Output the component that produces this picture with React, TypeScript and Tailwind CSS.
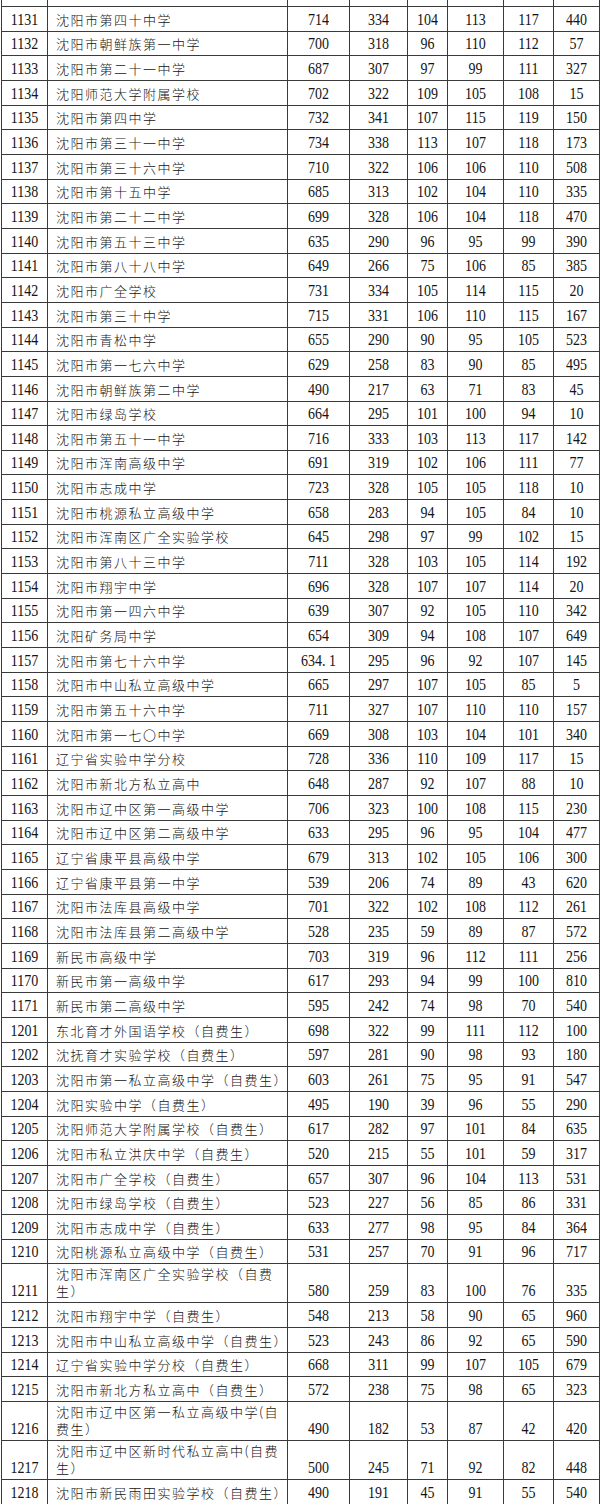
import React from "react";

type Row = [string, string[], string, string, string, string, string, string];

const rows: Row[] = [
  ["1131", ["沈阳市第四十中学"], "714", "334", "104", "113", "117", "440"],
  ["1132", ["沈阳市朝鲜族第一中学"], "700", "318", "96", "110", "112", "57"],
  ["1133", ["沈阳市第二十一中学"], "687", "307", "97", "99", "111", "327"],
  ["1134", ["沈阳师范大学附属学校"], "702", "322", "109", "105", "108", "15"],
  ["1135", ["沈阳市第四中学"], "732", "341", "107", "115", "119", "150"],
  ["1136", ["沈阳市第三十一中学"], "734", "338", "113", "107", "118", "173"],
  ["1137", ["沈阳市第三十六中学"], "710", "322", "106", "106", "110", "508"],
  ["1138", ["沈阳市第十五中学"], "685", "313", "102", "104", "110", "335"],
  ["1139", ["沈阳市第二十二中学"], "699", "328", "106", "104", "118", "470"],
  ["1140", ["沈阳市第五十三中学"], "635", "290", "96", "95", "99", "390"],
  ["1141", ["沈阳市第八十八中学"], "649", "266", "75", "106", "85", "385"],
  ["1142", ["沈阳市广全学校"], "731", "334", "105", "114", "115", "20"],
  ["1143", ["沈阳市第三十中学"], "715", "331", "106", "110", "115", "167"],
  ["1144", ["沈阳市青松中学"], "655", "290", "90", "95", "105", "523"],
  ["1145", ["沈阳市第一七六中学"], "629", "258", "83", "90", "85", "495"],
  ["1146", ["沈阳市朝鲜族第二中学"], "490", "217", "63", "71", "83", "45"],
  ["1147", ["沈阳市绿岛学校"], "664", "295", "101", "100", "94", "10"],
  ["1148", ["沈阳市第五十一中学"], "716", "333", "103", "113", "117", "142"],
  ["1149", ["沈阳市浑南高级中学"], "691", "319", "102", "106", "111", "77"],
  ["1150", ["沈阳市志成中学"], "723", "328", "105", "105", "118", "10"],
  ["1151", ["沈阳市桃源私立高级中学"], "658", "283", "94", "105", "84", "10"],
  ["1152", ["沈阳市浑南区广全实验学校"], "645", "298", "97", "99", "102", "15"],
  ["1153", ["沈阳市第八十三中学"], "711", "328", "103", "105", "114", "192"],
  ["1154", ["沈阳市翔宇中学"], "696", "328", "107", "107", "114", "20"],
  ["1155", ["沈阳市第一四六中学"], "639", "307", "92", "105", "110", "342"],
  ["1156", ["沈阳矿务局中学"], "654", "309", "94", "108", "107", "649"],
  ["1157", ["沈阳市第七十六中学"], "634. 1", "295", "96", "92", "107", "145"],
  ["1158", ["沈阳市中山私立高级中学"], "665", "297", "107", "105", "85", "5"],
  ["1159", ["沈阳市第五十六中学"], "711", "327", "107", "110", "110", "157"],
  ["1160", ["沈阳市第一七〇中学"], "669", "308", "103", "104", "101", "340"],
  ["1161", ["辽宁省实验中学分校"], "728", "336", "110", "109", "117", "15"],
  ["1162", ["沈阳市新北方私立高中"], "648", "287", "92", "107", "88", "10"],
  ["1163", ["沈阳市辽中区第一高级中学"], "706", "323", "100", "108", "115", "230"],
  ["1164", ["沈阳市辽中区第二高级中学"], "633", "295", "96", "95", "104", "477"],
  ["1165", ["辽宁省康平县高级中学"], "679", "313", "102", "105", "106", "300"],
  ["1166", ["辽宁省康平县第一中学"], "539", "206", "74", "89", "43", "620"],
  ["1167", ["沈阳市法库县高级中学"], "701", "322", "102", "108", "112", "261"],
  ["1168", ["沈阳市法库县第二高级中学"], "528", "235", "59", "89", "87", "572"],
  ["1169", ["新民市高级中学"], "703", "319", "96", "112", "111", "256"],
  ["1170", ["新民市第一高级中学"], "617", "293", "94", "99", "100", "810"],
  ["1171", ["新民市第二高级中学"], "595", "242", "74", "98", "70", "540"],
  ["1201", ["东北育才外国语学校（自费生）"], "698", "322", "99", "111", "112", "100"],
  ["1202", ["沈抚育才实验学校（自费生）"], "597", "281", "90", "98", "93", "180"],
  ["1203", ["沈阳市第一私立高级中学（自费生）"], "603", "261", "75", "95", "91", "547"],
  ["1204", ["沈阳实验中学（自费生）"], "495", "190", "39", "96", "55", "290"],
  ["1205", ["沈阳师范大学附属学校（自费生）"], "617", "282", "97", "101", "84", "635"],
  ["1206", ["沈阳市私立洪庆中学（自费生）"], "520", "215", "55", "101", "59", "317"],
  ["1207", ["沈阳市广全学校（自费生）"], "657", "307", "96", "104", "113", "531"],
  ["1208", ["沈阳市绿岛学校（自费生）"], "523", "227", "56", "85", "86", "331"],
  ["1209", ["沈阳市志成中学（自费生）"], "633", "277", "98", "95", "84", "364"],
  ["1210", ["沈阳桃源私立高级中学（自费生）"], "531", "257", "70", "91", "96", "717"],
  ["1211", ["沈阳市浑南区广全实验学校（自费", "生）"], "580", "259", "83", "100", "76", "335"],
  ["1212", ["沈阳市翔宇中学（自费生）"], "548", "213", "58", "90", "65", "960"],
  ["1213", ["沈阳市中山私立高级中学（自费生）"], "523", "243", "86", "92", "65", "590"],
  ["1214", ["辽宁省实验中学分校（自费生）"], "668", "311", "99", "107", "105", "679"],
  ["1215", ["沈阳市新北方私立高中（自费生）"], "572", "238", "75", "98", "65", "323"],
  ["1216", ["沈阳市辽中区第一私立高级中学(自", "费生）"], "490", "182", "53", "87", "42", "420"],
  ["1217", ["沈阳市辽中区新时代私立高中(自费", "生）"], "500", "245", "71", "92", "82", "448"],
  ["1218", ["沈阳市新民雨田实验学校（自费生）"], "490", "191", "45", "91", "55", "540"],
];

const numCols = ["w-[62px]", "w-[58px]", "w-[40px]", "w-[56px]", "w-[50px]", "w-[46px]"];

function NumCell({ value, width }: { value: string; width: string }) {
  return (
    <div
      className={`${width} shrink-0 border-r border-[#3a3a3a] flex items-end justify-center pb-[3px] font-['Liberation_Serif',serif] text-[14px] leading-[17px] whitespace-pre`}
    >
      <span className="inline-block scale-y-[1.2]">{value}</span>
    </div>
  );
}

function TableRow({ row }: { row: Row }) {
  const [id, name, ...nums] = row;
  const tall = name.length > 1;
  return (
    <div className={`flex border-b border-[#3a3a3a] ${tall ? "h-[39px]" : "h-[24.66px]"}`}>
      <NumCell value={id} width="w-[46px]" />
      <div className="w-[240px] shrink-0 border-r border-[#3a3a3a] flex flex-col justify-end pl-[8px] pb-[3px] font-['Noto_Sans_CJK_SC',sans-serif] font-light text-[13px] leading-[17px] tracking-[1.5px] whitespace-nowrap">
        {name.map((line) => (
          <span key={line}>{line}</span>
        ))}
      </div>
      {nums.map((n, i) => (
        <NumCell key={i} value={n} width={numCols[i]} />
      ))}
    </div>
  );
}

export default function App() {
  return (
    <div className="w-[600px] h-[1504px] overflow-hidden bg-white text-[#141414]">
      <div className="ml-[1px] border-l border-[#3a3a3a]">
        <div className="flex h-[7px] border-b border-[#3a3a3a]">
          <div className="w-[46px] shrink-0 border-r border-[#3a3a3a]" />
          <div className="w-[240px] shrink-0 border-r border-[#3a3a3a]" />
          {numCols.map((w) => (
            <div key={w} className={`${w} shrink-0 border-r border-[#3a3a3a]`} />
          ))}
        </div>
        {rows.map((r) => (
          <TableRow key={r[0]} row={r} />
        ))}
      </div>
    </div>
  );
}
